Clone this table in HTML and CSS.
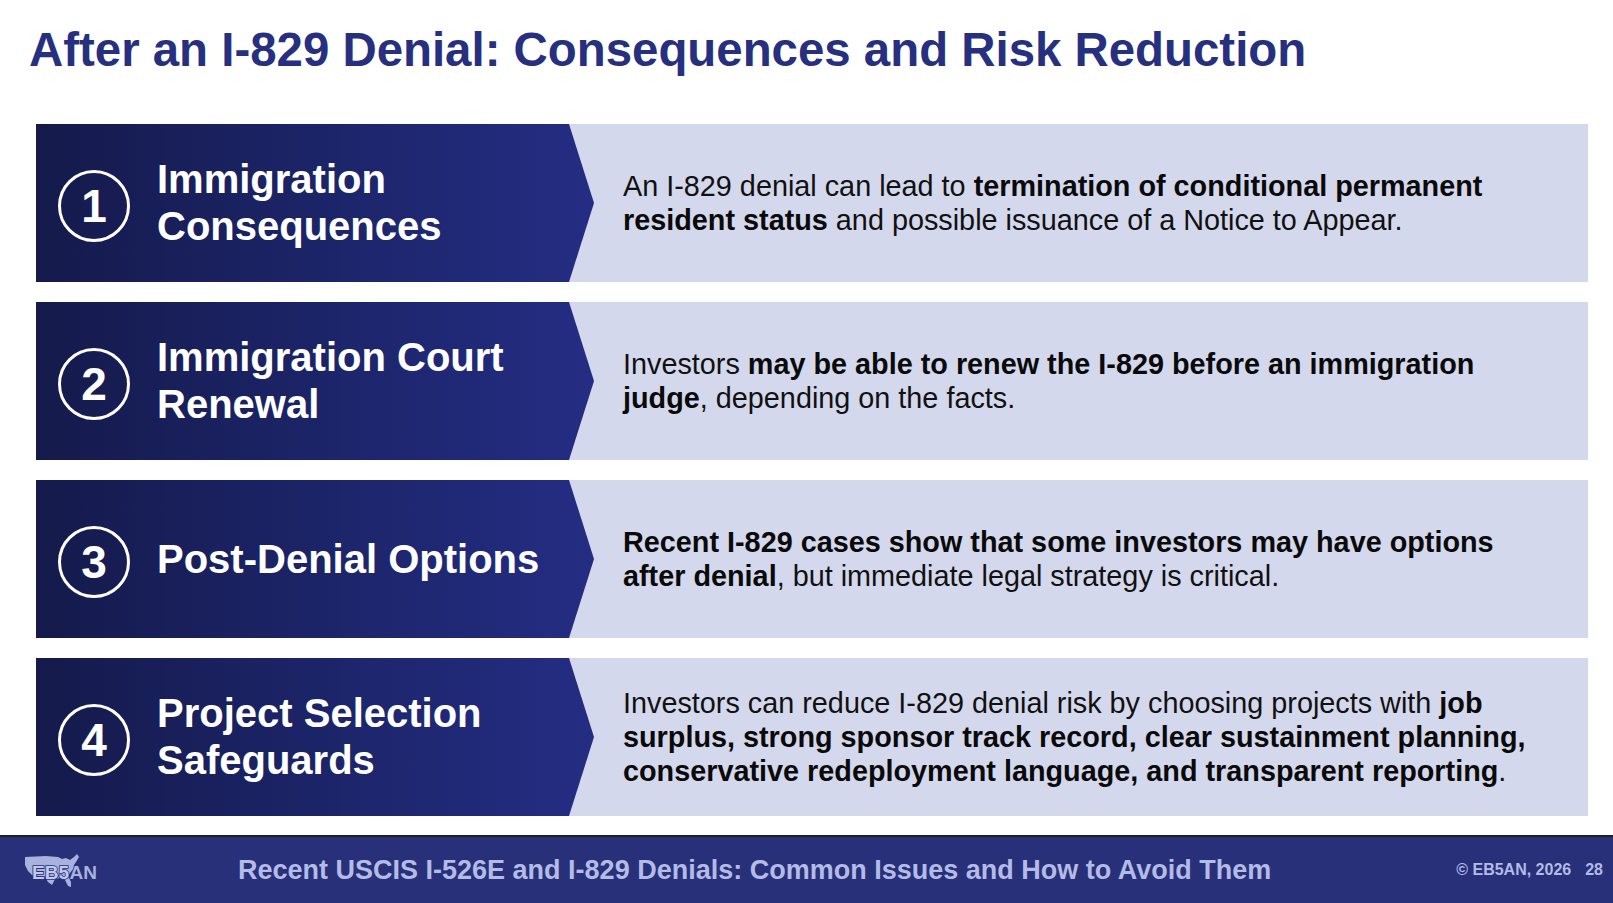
FILE: index.html
```html
<!DOCTYPE html>
<html lang="en">
<head>
<meta charset="utf-8">
<title>After an I-829 Denial</title>
<link rel="stylesheet" href="styles.css">
</head>
<body>
<div class="slide">
  <h1 class="title">After an I-829 Denial: Consequences and Risk Reduction</h1>
  <div class="cards">
    <div class="card">
      <div class="panel">
        <div class="num">1</div>
        <div class="label">Immigration Consequences</div>
      </div>
      <div class="desc">An I-829 denial can lead to <b>termination of conditional permanent</b><br><b>resident status</b> and possible issuance of a Notice to Appear.</div>
    </div>
    <div class="card">
      <div class="panel">
        <div class="num">2</div>
        <div class="label">Immigration Court Renewal</div>
      </div>
      <div class="desc">Investors <b>may be able to renew the I-829 before an immigration</b><br><b>judge</b>, depending on the facts.</div>
    </div>
    <div class="card">
      <div class="panel">
        <div class="num">3</div>
        <div class="label">Post-Denial Options</div>
      </div>
      <div class="desc"><b>Recent I-829 cases show that some investors may have options</b><br><b>after denial</b>, but immediate legal strategy is critical.</div>
    </div>
    <div class="card">
      <div class="panel">
        <div class="num">4</div>
        <div class="label">Project Selection Safeguards</div>
      </div>
      <div class="desc">Investors can reduce I-829 denial risk by choosing projects with <b>job</b><br><b>surplus, strong sponsor track record, clear sustainment planning,</b><br><b>conservative redeployment language, and transparent reporting</b>.</div>
    </div>
  </div>
  <footer class="footer">
    <svg class="logo" viewBox="0 0 76 35" width="76" height="35" aria-label="EB5AN">
      <path class="map" d="M1 3 L22 2 L34 3 L38 5 L42 4 L46 6 L50 3 L53 0 L55 3 L52 8 L50 11 L49 15 L46 19 L44 22 L47 28 L47 33 L44 32 L41 26 L36 24 L31 25 L28 31 L24 28 L21 23 L14 22 L8 21 L4 17 L1 11 Z"/>
      <text class="logo-text" x="8" y="25"><tspan class="eb5">EB5</tspan><tspan dx="0.5">AN</tspan></text>
    </svg>
    <div class="foot-title">Recent USCIS I-526E and I-829 Denials: Common Issues and How to Avoid Them</div>
    <div class="foot-copy">© EB5AN, 2026<span class="page">28</span></div>
  </footer>
</div>
</body>
</html>
```

FILE: styles.css
```css
* { box-sizing: border-box; }
html, body { margin: 0; padding: 0; }
body {
  background: #ffffff;
  font-family: "Liberation Sans", Arial, sans-serif;
  width: 1613px;
  height: 903px;
  overflow: hidden;
}
.slide {
  width: 1613px;
  height: 903px;
  display: flex;
  flex-direction: column;
}
.title {
  margin: 22px 0 0 0;
  padding-left: 29px;
  font-size: 47.4px;
  line-height: 56px;
  font-weight: 700;
  color: #27307f;
}
.cards {
  margin: 46px 25px 0 36px;
  display: flex;
  flex-direction: column;
  gap: 20px;
}
.card {
  height: 158px;
  background: #d4d8ec;
  display: flex;
  align-items: center;
}
.panel {
  width: 558px;
  height: 100%;
  flex: none;
  display: flex;
  align-items: center;
  padding-left: 22px;
  background: linear-gradient(90deg, #151a4b 0%, #1c2468 50%, #242d83 100%);
  clip-path: polygon(0 0, calc(100% - 25px) 0, 100% 50%, calc(100% - 25px) 100%, 0 100%);
}
.num {
  width: 72px;
  height: 72px;
  flex: none;
  border: 3px solid #ffffff;
  border-radius: 50%;
  color: #ffffff;
  font-size: 46px;
  font-weight: 700;
  display: flex;
  align-items: center;
  justify-content: center;
  line-height: 1;
  margin-top: 6px;
}
.label {
  margin-left: 27px;
  width: 412px;
  color: #ffffff;
  font-size: 40px;
  font-weight: 700;
  line-height: 47px;
}
.desc {
  margin-left: 29px;
  padding-right: 40px;
  font-size: 28.8px;
  line-height: 34px;
  color: #111111;
  white-space: nowrap;
}
.desc b { font-weight: 700; color: #0a0a0a; }
.footer {
  margin-top: auto;
  height: 68px;
  border-top: 2px solid #1e1e2a;
  background: #283079;
  display: flex;
  align-items: center;
  padding: 0 10px 0 24px;
}
.logo { flex: none; display: block; margin-top: 2px; }
.map { fill: #a9b1df; }
.logo-text {
  font-family: "Liberation Sans", Arial, sans-serif;
  font-weight: 700;
  font-size: 19px;
  fill: #a9b1df;
}
.eb5 {
  stroke: #283079;
  stroke-width: 1.6px;
  paint-order: stroke;
  fill: #c3c9ec;
}
.foot-title {
  margin-left: 138px;
  font-size: 27px;
  font-weight: 700;
  color: #b3bbe6;
}
.foot-copy {
  margin-left: auto;
  font-size: 16px;
  font-weight: 700;
  color: #b3bbe6;
}
.page { margin-left: 14px; }
```
